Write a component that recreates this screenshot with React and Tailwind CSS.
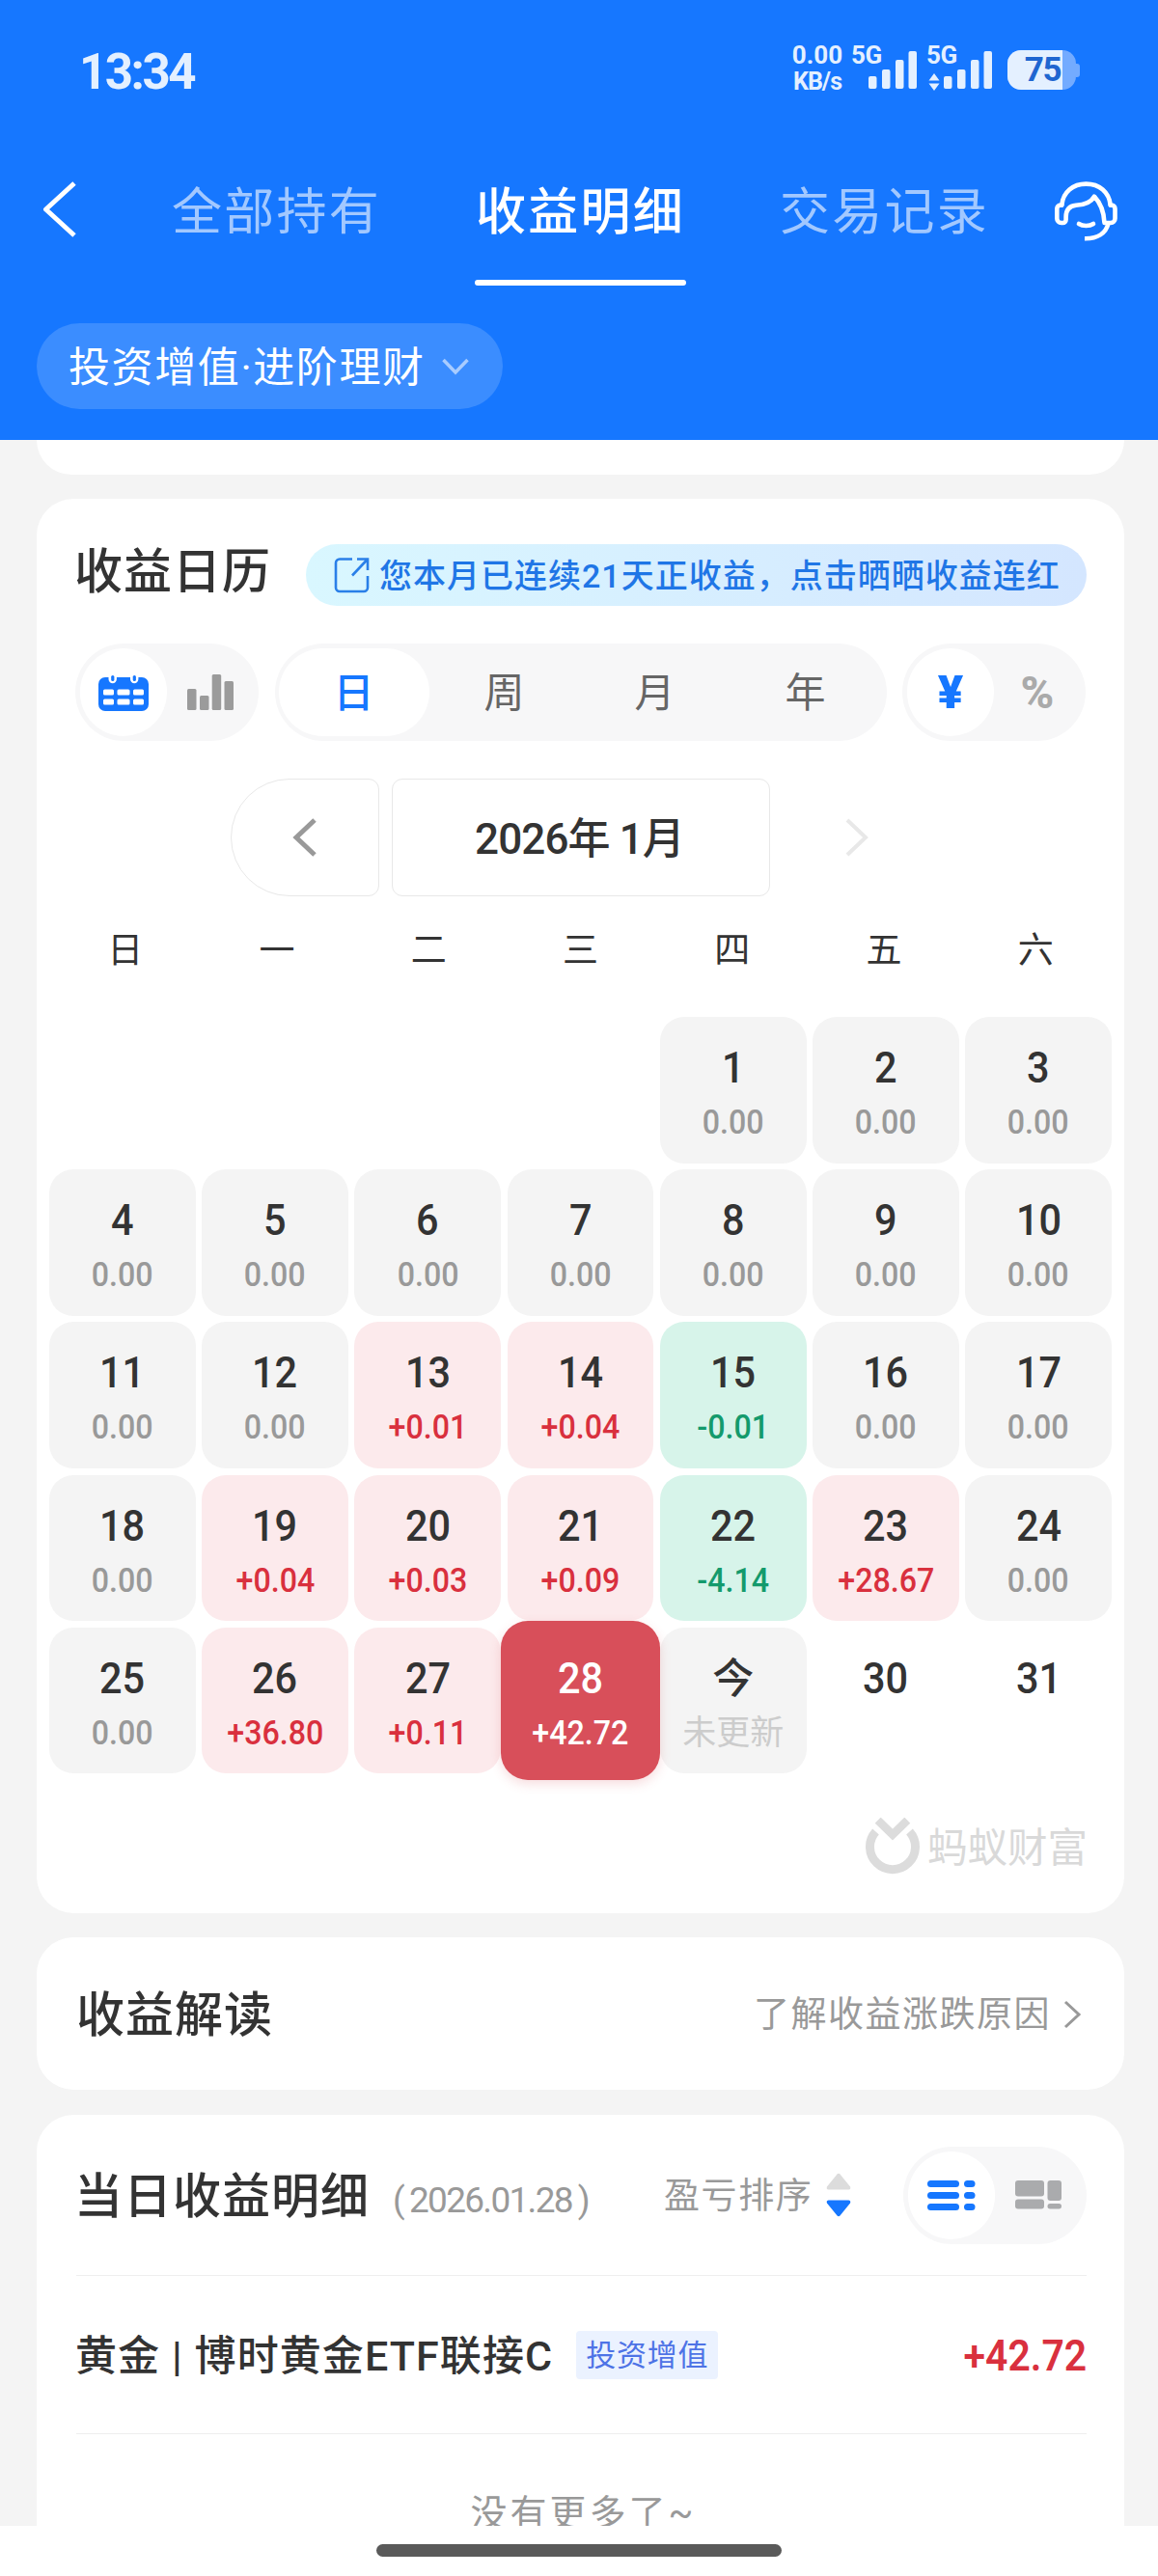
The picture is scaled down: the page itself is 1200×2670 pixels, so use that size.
import clsx from 'clsx'

const weekdays = ['日', '一', '二', '三', '四', '五', '六']

// profit per day, index 0 is the 1st
const profits = [
    '0.00', '0.00', '0.00', '0.00', '0.00', '0.00', '0.00', '0.00', '0.00', '0.00',
    '0.00', '0.00', '+0.01', '+0.04', '-0.01', '0.00', '0.00', '0.00', '+0.04', '+0.03',
    '+0.09', '-4.14', '+28.67', '0.00', '0.00', '+36.80', '+0.11', '+42.72', '未更新', null, null,
]
const firstWeekday = 4
const today = 29
const selected = 28

function SignalBars() {
    return (
        <svg width="50" height="40" viewBox="0 0 50 40" fill="currentColor">
            <rect x="0" y="27" width="8.5" height="13" rx="2" />
            <rect x="14" y="20" width="8.5" height="20" rx="2" />
            <rect x="28" y="10" width="8.5" height="30" rx="2" />
            <rect x="41.5" y="1" width="8.5" height="39" rx="2" />
        </svg>
    )
}

function StatusBar() {
    return (
        <div className="flex h-[148px] items-center justify-between pl-[82px] pr-[81px] text-[#e4f0ff]">
            <span className="text-[51px] font-bold leading-none tracking-[-2.5px]">13:34</span>
            <div className="mb-[8px] flex h-[46px] items-start">
                <div className="-mt-[3px] mr-[8px] w-[54px] text-center text-[26px] font-bold leading-[27px]">
                    <p>0.00</p>
                    <p className="text-[25px] tracking-[-1px]">KB/s</p>
                </div>
                <div className="relative h-[46px] w-[68px]">
                    <span className="absolute left-0 -top-[3px] text-[26px] font-bold leading-[27px] tracking-[-0.5px]">5G</span>
                    <div className="absolute left-[18px] top-[5px]"><SignalBars /></div>
                </div>
                <div className="relative ml-[10px] h-[46px] w-[68px]">
                    <span className="absolute left-0 -top-[3px] text-[26px] font-bold leading-[27px] tracking-[-0.5px]">5G</span>
                    <svg className="absolute left-[2px] top-[29px]" width="12" height="18" viewBox="0 0 12 18" fill="currentColor">
                        <path d="M6 0 11.5 7.5H.5zM6 18 .5 10.5h11z" />
                    </svg>
                    <div className="absolute left-[18px] top-[5px]"><SignalBars /></div>
                </div>
                <div className="ml-[16px] mt-[5px] flex h-[41px] w-[75px] items-center">
                    <div className="flex h-[41px] w-[71px] overflow-hidden rounded-[14px] bg-[#73abff]">
                        <div className="flex w-[57px] items-center justify-end bg-[#e4f0ff] pr-[2px]">
                            <span className="text-[35px] font-bold leading-none tracking-[-1.5px] text-[#1f66d0]">75</span>
                        </div>
                    </div>
                    <div className="h-[14px] w-[4px] rounded-r-[3px] bg-[#73abff]" />
                </div>
            </div>
        </div>
    )
}

function Tab({ label, active }) {
    return (
        <div className="flex w-[219px] flex-col">
            <div className={clsx('flex h-[142px] items-center justify-center pt-[3px] text-[52px] leading-none tracking-[2.3px]', active ? 'font-medium text-white' : 'text-[#a2c8ff]')}>
                {label}
            </div>
            <div className={clsx('h-[6px] rounded-full', active && 'bg-white')} />
        </div>
    )
}

function Header() {
    return (
        <header className="h-[456px] bg-[#1677ff]">
            <StatusBar />
            <div className="flex h-[148px]">
                <div className="flex h-[138px] w-[177px] items-center pl-[44px]">
                    <svg width="36" height="58" viewBox="0 0 36 58" fill="none" stroke="#fff" strokeWidth="5">
                        <path d="M33 2 3.500 29 33 56" strokeLinejoin="round" />
                    </svg>
                </div>
                <div className="flex gap-[96px]">
                    <Tab label="全部持有" />
                    <Tab label="收益明细" active />
                    <Tab label="交易记录" />
                </div>
                <div className="flex h-[142px] items-center pl-[67px]">
                    <svg width="66" height="62" viewBox="0 0 66 62" fill="none" stroke="#fff" strokeWidth="4.6" strokeLinecap="round" strokeLinejoin="round">
                        <path d="M7.300 24.600C8.500 11 19 2.600 32.500 2.600S56.500 11 57.700 24.600" />
                        <path d="M7.300 24.600H6a3.700 3.700 0 0 0-3.700 3.700V38.500a4.500 4.500 0 0 0 4.500 4.500h1.500a3.300 3.300 0 0 0 3.300-3.300V37C11.600 30 15 25.500 22 24.800 30 24.500 37 23 41 15.700 47 22 51 32 51.500 43h6.500a4.500 4.500 0 0 0 4.500-4.500V28.300a3.700 3.700 0 0 0-3.700-3.700h-1.100" />
                        <path d="M25 44c4 2.600 11 2.600 15 0" />
                        <path d="M55.500 43.500C53 54 44 59.500 31 59.200" strokeLinecap="butt" />
                    </svg>
                </div>
            </div>
            <div className="ml-[38px] mt-[39px] flex h-[89px] w-[483px] items-center rounded-full bg-[#3b8dff] pl-[33px] text-white">
                <span className="mt-[3px] whitespace-nowrap text-[43px] leading-none tracking-[1.6px]">投资增值·进阶理财</span>
                <svg className="ml-[17px]" width="28" height="18" viewBox="0 0 28 18" fill="none" stroke="#a8ccff" strokeWidth="3.500">
                    <path d="M1.500 2 14 15 26.500 2" />
                </svg>
            </div>
        </header>
    )
}

function CalendarIcon() {
    return (
        <svg width="52" height="38" viewBox="0 0 52 38">
            <rect x="0" y="3" width="52" height="35" rx="7" fill="#1677ff" />
            <path d="M10.500 0v5a4.200 4.200 0 0 0 8.400 0V0zM33 0v5a4.200 4.200 0 0 0 8.400 0V0z" fill="#fff" />
            <rect x="13.200" y="1" width="3.200" height="6" rx="1.600" fill="#1677ff" />
            <rect x="35.700" y="1" width="3.200" height="6" rx="1.600" fill="#1677ff" />
            <g fill="#fff">
                <rect x="5" y="15.500" width="11" height="6" rx="1.500" />
                <rect x="19.500" y="15.500" width="13" height="6" rx="1.500" />
                <rect x="36" y="15.500" width="11" height="6" rx="1.500" />
                <rect x="5" y="25.500" width="11" height="6" rx="1.500" />
                <rect x="19.500" y="25.500" width="13" height="6" rx="1.500" />
                <rect x="36" y="25.500" width="11" height="6" rx="1.500" />
            </g>
        </svg>
    )
}

function Toggle({ left, right }) {
    return (
        <div className="flex h-[101px] w-[190px] shrink-0 items-center rounded-full bg-[#f7f7f8] p-[5px]">
            <div className="flex h-[91px] w-[90px] items-center justify-center rounded-full bg-white">{left}</div>
            <div className="flex h-[91px] flex-1 items-center justify-center">{right}</div>
        </div>
    )
}

function Controls() {
    return (
        <div className="mt-[39px] flex justify-between pl-[40px] pr-[40px]">
            <Toggle
                left={<CalendarIcon />}
                right={
                    <svg width="48" height="37" viewBox="0 0 48 37" fill="#9b9b9b">
                        <rect x="0" y="15" width="9.500" height="22" rx="1.500" />
                        <rect x="13" y="22" width="9.500" height="15" rx="1.500" />
                        <rect x="25.700" y="0" width="9.500" height="37" rx="1.500" />
                        <rect x="38.500" y="7" width="9.500" height="30" rx="1.500" />
                    </svg>
                }
            />
            <div className="flex h-[101px] w-[634px] items-center rounded-full bg-[#f7f7f8] pl-[4px] pr-[6px] text-[42px] leading-none text-[#666]">
                <div className="flex h-[91px] w-[156px] items-center justify-center rounded-full bg-white pt-[2px] font-medium text-[#1677ff]">日</div>
                <div className="flex-1 pt-[3px] text-center">周</div>
                <div className="flex-1 pt-[3px] text-center">月</div>
                <div className="flex-1 pt-[3px] text-center">年</div>
            </div>
            <Toggle
                left={<span className="text-[49px] font-black leading-none text-[#1677ff]">¥</span>}
                right={<span className="text-[47px] font-extrabold leading-none text-[#aaa]">%</span>}
            />
        </div>
    )
}

function MonthNav() {
    return (
        <div className="mt-[39px] flex h-[122px] gap-[13px] pl-[201px]">
            <div className="flex w-[154px] items-center justify-center rounded-l-[61px] rounded-r-[11px] border border-[#e8e8e8]">
                <svg width="26" height="40" viewBox="0 0 26 40" fill="none" stroke="#999" strokeWidth="5">
                    <path d="M23 2 4 20l19 18" />
                </svg>
            </div>
            <div className="flex w-[392px] items-center justify-center rounded-[11px] border border-[#e8e8e8] pr-[3px] pt-[4px] text-[44px] font-medium leading-none tracking-[-0.9px] text-[#333]">
                2026年 1月
            </div>
            <div className="flex w-[154px] items-center justify-center">
                <svg width="26" height="40" viewBox="0 0 26 40" fill="none" stroke="#e8e8e8" strokeWidth="4">
                    <path d="M3 2l19 18L3 38" />
                </svg>
            </div>
        </div>
    )
}

function Day({ day, value }) {
    const isToday = day === today
    const isSelected = day === selected
    const up = value && value[0] === '+'
    const down = value && value[0] === '-'

    return (
        <div
            className={clsx(
                'flex flex-col items-center',
                isSelected
                    ? 'z-10 -m-[6.500px] rounded-[28px] bg-[#d84f5a] pt-[36.500px] shadow-[0_4px_12px_rgba(216,79,90,0.2)]'
                    : 'rounded-[25px] pt-[30px]',
                !isSelected && up && 'bg-[#fceaec]',
                down && 'bg-[#d7f4ea]',
                value && !up && !down && 'bg-[#f4f4f4]'
            )}
        >
            <span
                className={clsx(
                    'h-[46px] font-medium leading-[46px]',
                    isToday ? 'text-[43px]' : 'scale-x-[0.92] text-[45px]',
                    isSelected ? 'text-white' : 'text-[#333]'
                )}
            >
                {isToday ? '今' : day}
            </span>
            <span
                className={clsx(
                    'mt-[14px] h-[40px] text-[35px] leading-[40px]',
                    !isToday && 'scale-x-[0.92] font-medium',
                    isSelected && 'text-white',
                    !isSelected && up && 'text-[#d9303e]',
                    down && 'text-[#149a6c]',
                    isToday && 'text-[#ccc]',
                    !up && !down && !isToday && 'text-[#999]'
                )}
            >
                {value}
            </span>
        </div>
    )
}

function AntLogo() {
    return (
        <svg width="56" height="60" viewBox="0 0 56 60" fill="none" stroke="#dcdcdc">
            <path d="M10.500 14.500a23.500 23.500 0 1 0 35 0" strokeWidth="9" />
            <path d="M12.700 2.700 28 17.500 43.300 2.700" strokeWidth="8.500" />
        </svg>
    )
}

function CalendarCard() {
    return (
        <section className="mt-[25px] h-[1466px] rounded-[38px] bg-white pt-[47px]">
            <div className="flex h-[64px] items-center pl-[41px]">
                <h2 className="-ml-[2px] mb-[6px] w-[240px] text-[50px] font-medium leading-none tracking-[1px] text-[#333]">收益日历</h2>
                <div className="flex h-[64px] w-[809px] items-center rounded-full bg-linear-to-r from-[#d9f7ff] to-[#d4e6ff] pl-[29px]">
                    <svg width="37" height="38" viewBox="0 0 37 38" fill="none" stroke="#2a7fe8" strokeWidth="2.600">
                        <path d="M19 2.500H6a4 4 0 0 0-4 4V32a4 4 0 0 0 4 4h25a4 4 0 0 0 4-4V20" />
                        <path d="M24 2.500h11V14M35 2.500 19 19.500" />
                    </svg>
                    <span className="ml-[10px] mt-[2px] whitespace-nowrap text-[34px] font-medium leading-none tracking-[1px] text-[#1f76e6]">
                        您本月已连续21天正收益，点击晒晒收益连红
                    </span>
                </div>
            </div>

            <Controls />
            <MonthNav />

            <div className="mt-[33px] grid grid-cols-7 px-[13px] text-center text-[37px] leading-[48px] text-[#333]">
                {weekdays.map(w => <div key={w}>{w}</div>)}
            </div>

            <div className="mt-[44px] grid auto-rows-[151.700px] grid-cols-7 gap-[6.500px] px-[13px]">
                {Array.from({ length: firstWeekday }).map((_, i) => <div key={'empty' + i} />)}
                {profits.map((value, i) => <Day key={i} day={i + 1} value={value} />)}
            </div>

            <div className="mt-[46px] flex h-[60px] items-center justify-end gap-[8px] pr-[38px]">
                <AntLogo />
                <span className="mt-[3px] text-[41.500px] leading-none text-[#d9d9d9]">蚂蚁财富</span>
            </div>
        </section>
    )
}

function DetailCard() {
    return (
        <section className="mt-[26px] h-[426px] overflow-hidden rounded-t-[38px] bg-white pl-[41px] pr-[39px]">
            <div className="flex h-[167px] items-center border-b border-[#eee]">
                <h2 className="-ml-[2px] mt-[3px] whitespace-nowrap text-[50px] font-medium leading-none tracking-[1px] text-[#333]">当日收益明细</h2>
                <span className="ml-[24px] mt-[10px] w-[281px] whitespace-nowrap text-[37px] leading-none tracking-[-1.700px] text-[#999]">
                    (<span className="px-[6px]">2026.01.28</span>)
                </span>
                <span className="mt-[2px] whitespace-nowrap text-[37px] leading-none tracking-[1.600px] text-[#999]">盈亏排序</span>
                <svg className="ml-[14px]" width="26" height="46" viewBox="0 0 26 46">
                    <path d="M11.500 1.500q1.500-1.500 3 0L25 14.500q1 3-1.500 3h-21q-2.500 0-1.500-3z" fill="#dcdcdc" />
                    <path d="M11.500 44.500q1.500 1.500 3 0L25 31.500q1-3-1.500-3h-21q-2.500 0-1.500 3z" fill="#1677ff" />
                </svg>
                <div className="ml-auto">
                    <Toggle
                        left={
                            <svg width="50" height="31" viewBox="0 0 50 31" fill="#1677ff">
                                <rect x="0" y="0" width="33" height="7" rx="3.500" />
                                <rect x="0" y="12" width="33" height="7" rx="3.500" />
                                <rect x="0" y="24" width="33" height="7" rx="3.500" />
                                <rect x="38" y="0" width="11.500" height="7" rx="3.500" />
                                <rect x="38" y="12" width="11.500" height="7" rx="3.500" />
                                <rect x="38" y="24" width="11.500" height="7" rx="3.500" />
                            </svg>
                        }
                        right={
                            <svg width="48" height="30" viewBox="0 0 48 30" fill="#aaabad">
                                <rect x="0" y="0" width="30" height="16.500" rx="3" />
                                <rect x="0" y="19.500" width="30" height="10" rx="3" />
                                <rect x="33.500" y="0" width="14.500" height="21" rx="3" />
                                <rect x="33.500" y="24" width="14.500" height="5.500" rx="2.700" />
                            </svg>
                        }
                    />
                </div>
            </div>

            <div className="flex h-[164px] items-center border-b border-[#eee]">
                <span className="-ml-[1px] mt-[3px] whitespace-nowrap text-[43px] font-medium leading-none tracking-[1.100px] text-[#333]">
                    黄金 | 博时黄金ETF联接C
                </span>
                <span className="ml-[24px] flex h-[50px] w-[147px] items-center justify-center rounded-[4px] bg-[#ebf2ff] pt-[2px] text-[31px] leading-none tracking-[0.700px] text-[#4e73e6]">
                    投资增值
                </span>
                <span className="ml-auto mt-[3px] origin-right scale-x-[0.93] text-[44px] font-semibold leading-none text-[#d9303e]">+42.72</span>
            </div>

            <p className="pl-[4px] pt-[58px] text-center text-[38px] leading-[48px] tracking-[3px] text-[#999]">没有更多了~</p>
        </section>
    )
}

export default function App() {
    return (
        <div className="h-[2670px] w-[1200px] overflow-hidden bg-white font-['Roboto','Noto_Sans_CJK_SC',sans-serif]">
            <Header />
            <main className="h-[2162px] overflow-hidden bg-[#f4f4f4] pl-[38px] pr-[35px]">
                <div className="h-[36px] rounded-b-[38px] bg-white" />
                <CalendarCard />
                <section className="mt-[25px] flex h-[158px] items-center justify-between rounded-[38px] bg-white pl-[41px] pr-[43px]">
                    <h2 className="mt-[3px] text-[50px] font-medium leading-none tracking-[1px] text-[#333]">收益解读</h2>
                    <div className="flex items-center pt-[2px] text-[37px] leading-none tracking-[1.500px] text-[#999]">
                        了解收益涨跌原因
                        <svg className="ml-[13px]" width="20" height="30" viewBox="0 0 20 30" fill="none" stroke="#999" strokeWidth="3">
                            <path d="M2 2l14 13L2 28" />
                        </svg>
                    </div>
                </section>
                <DetailCard />
            </main>
            <div className="mx-auto mt-[19px] h-[13px] w-[420px] rounded-full bg-[#5a5a5a]" />
        </div>
    )
}
